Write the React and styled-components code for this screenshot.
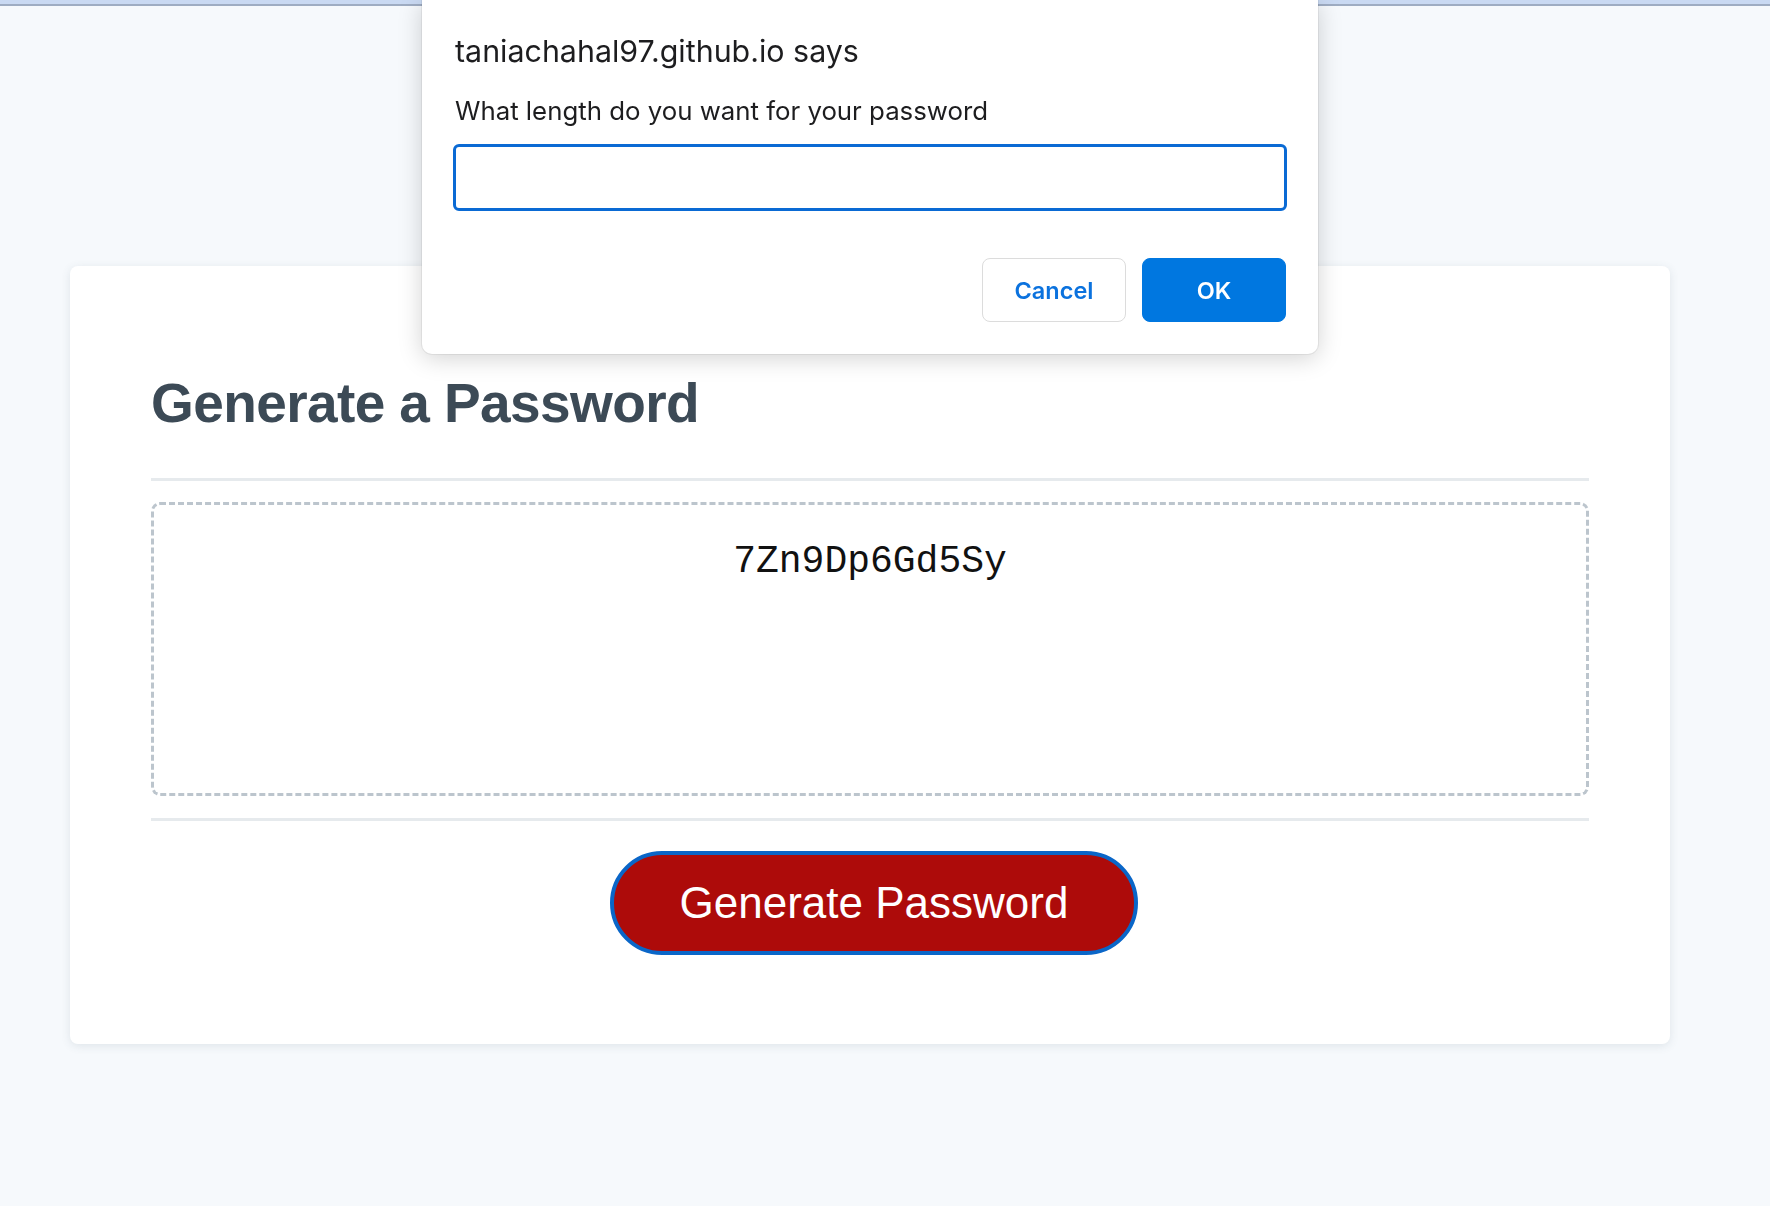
import React from 'react'
import styled, { createGlobalStyle } from 'styled-components'

const GlobalStyle = createGlobalStyle`
  html, body {
    margin: 0;
    padding: 0;
    background: #f6f9fc;
    font-family: "Liberation Sans", Arial, sans-serif;
  }
`

function App() {
  return (
    <>
      <GlobalStyle />
      <Page>
        <TopBar />
        <Card>
          <Heading>Generate a Password</Heading>
          <Divider />
          <PasswordBox readOnly value="7Zn9Dp6Gd5Sy" />
          <Divider />
          <Actions>
            <GenerateButton>Generate Password</GenerateButton>
          </Actions>
        </Card>
      </Page>

      <Dialog>
        <DialogTitle>taniachahal97.github.io says</DialogTitle>
        <DialogMessage>What length do you want for your password</DialogMessage>
        <DialogInput type="text" />
        <DialogButtons>
          <DialogButton>Cancel</DialogButton>
          <DialogButton primary>OK</DialogButton>
        </DialogButtons>
      </Dialog>
    </>
  )
}

export default App

const Page = styled.div`
  min-height: 1206px;
  background: #f6f9fc;
`

const TopBar = styled.div`
  height: 4px;
  background: #c9d9f2;
  border-bottom: 2px solid #9eacc2;
`

const Card = styled.div`
  margin: 260px 0 0 70px;
  width: 1600px;
  box-sizing: border-box;
  padding: 105px 81px 89px;
  background: #fff;
  border-radius: 8px;
  box-shadow: 0 2px 10px rgba(60, 80, 100, 0.12);
`

const Heading = styled.h1`
  margin: 0 0 43px;
  font-size: 55px;
  line-height: 64px;
  font-weight: 700;
  letter-spacing: -0.6px;
  color: #3c4a56;
`

const Divider = styled.div`
  height: 3px;
  background: #e6eaed;
`

const PasswordBox = styled.textarea`
  display: block;
  box-sizing: border-box;
  width: 100%;
  height: 294px;
  margin: 21px 0 22px;
  padding: 35px 20px 0;
  border: 3px dashed #bcc5cd;
  border-radius: 9px;
  resize: none;
  outline: none;
  text-align: center;
  font-family: "Liberation Mono", "Courier New", monospace;
  font-size: 38px;
  line-height: 43px;
  color: #111;
  background: #fff;
`

const Actions = styled.div`
  display: flex;
  justify-content: center;
  padding-top: 30px;
  padding-left: 8px;
`

const GenerateButton = styled.button`
  width: 528px;
  height: 104px;
  border: 4px solid #0a66c8;
  border-radius: 52px;
  background: #ad0b0a;
  color: #fff;
  font-family: "Liberation Sans", Arial, sans-serif;
  font-size: 44px;
  cursor: pointer;
`

const Dialog = styled.div`
  position: fixed;
  top: 0;
  left: 422px;
  width: 896px;
  box-sizing: border-box;
  padding: 33px 31px 32px;
  background: #fff;
  border-radius: 0 0 10px 10px;
  box-shadow: 0 4px 24px rgba(0, 0, 0, 0.18), 0 0 0 1px rgba(0, 0, 0, 0.06);
  font-family: Inter, "Noto Sans", sans-serif;
  color: #1d1d1f;
`

const DialogTitle = styled.div`
  padding-left: 2px;
  font-size: 30.4px;
  line-height: 36px;
`

const DialogMessage = styled.div`
  margin-top: 26px;
  padding-left: 2px;
  font-size: 25.8px;
  line-height: 32px;
`

const DialogInput = styled.input`
  display: block;
  box-sizing: border-box;
  width: 100%;
  height: 67px;
  margin-top: 17px;
  border: 3px solid #0a6ad4;
  border-radius: 6px;
  outline: none;
  font-size: 24px;
  padding: 0 12px;
`

const DialogButtons = styled.div`
  display: flex;
  justify-content: flex-end;
  gap: 16px;
  margin-top: 47px;
  padding-right: 1px;
`

const DialogButton = styled.button`
  width: 144px;
  height: 64px;
  box-sizing: border-box;
  border-radius: 8px;
  border: 1px solid ${p => (p.primary ? '#0077e0' : '#dcdcdc')};
  background: ${p => (p.primary ? '#0077e0' : '#fff')};
  color: ${p => (p.primary ? '#fff' : '#0b72de')};
  font-family: Inter, "Noto Sans", sans-serif;
  font-size: 23.5px;
  font-weight: 600;
  cursor: pointer;
`
